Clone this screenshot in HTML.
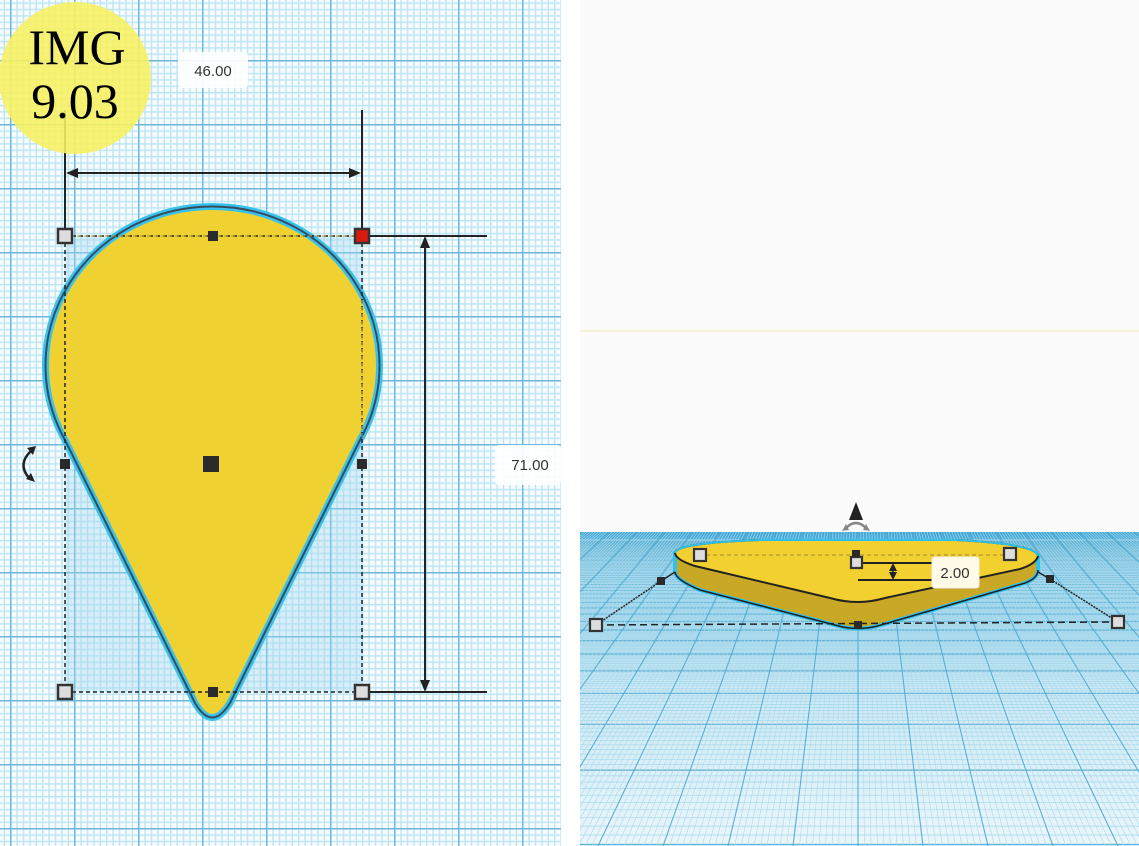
<!DOCTYPE html>
<html><head><meta charset="utf-8"><style>
html,body{margin:0;padding:0;background:#fff;width:1139px;height:846px;overflow:hidden}
svg{display:block}
</style></head><body>
<svg id="s" width="1139" height="846" viewBox="0 0 1139 846" xmlns="http://www.w3.org/2000/svg">
<defs>
<pattern id="minor" x="10" y="60" width="6.4" height="6.4" patternUnits="userSpaceOnUse">
<rect width="6.4" height="6.4" fill="#f6fbfd"/>
<rect x="0" y="0" width="1.4" height="6.4" fill="#bde5f4"/>
<rect x="0" y="0" width="6.4" height="1.4" fill="#bde5f4"/>
</pattern>
<pattern id="major" x="10" y="60" width="64" height="64" patternUnits="userSpaceOnUse">
<rect x="0" y="0" width="1.5" height="64" fill="#6db8d8"/>
<rect x="0" y="0" width="64" height="1.5" fill="#6db8d8"/>
</pattern>
<linearGradient id="gnd" x1="0" y1="0" x2="0" y2="1">
<stop offset="0" stop-color="#3fa6d6"/><stop offset="0.1" stop-color="#8ccbe6"/><stop offset="0.45" stop-color="#c8e7f3"/><stop offset="1" stop-color="#eaf6fb"/>
</linearGradient>
<clipPath id="rc"><rect x="580" y="532" width="559" height="314"/></clipPath>
</defs>
<rect x="0" y="0" width="561" height="846" fill="url(#minor)"/>
<rect x="0" y="0" width="561" height="846" fill="url(#major)"/>
<rect x="561" y="0" width="19" height="846" fill="#fff"/>
<rect x="65" y="236" width="297" height="456" fill="#9fd6ee" opacity="0.35"/>
<path d="M65 440 A167 159 0 1 1 360 440 L230 703 Q212 732 195 703 Z" fill="#f0d132" stroke="#35c3ee" stroke-width="7"/>
<path d="M65 440 A167 159 0 1 1 360 440 L230 703 Q212 732 195 703 Z" fill="none" stroke="#3a4a5a" stroke-width="2"/>
<g stroke="#222" stroke-width="1.5" stroke-dasharray="4 3" fill="none">
<line x1="65" y1="236" x2="362" y2="236"/><line x1="65" y1="692" x2="362" y2="692"/>
<line x1="65" y1="236" x2="65" y2="692"/><line x1="362" y1="236" x2="362" y2="692"/>
</g>
<g stroke="#b39a3a" stroke-width="1" stroke-dasharray="4 3" fill="none">
<line x1="70" y1="236" x2="357" y2="236"/><line x1="362" y1="300" x2="362" y2="440"/>
</g>
<g stroke="#222" stroke-width="2" fill="none">
<line x1="65" y1="110" x2="65" y2="236"/><line x1="362" y1="110" x2="362" y2="236"/>
<line x1="68" y1="173" x2="359" y2="173"/>
<line x1="362" y1="236" x2="487" y2="236"/><line x1="362" y1="692" x2="487" y2="692"/>
<line x1="425" y1="240" x2="425" y2="688"/>
</g>
<g fill="#222">
<path d="M66 173 L78 168 L78 178 Z"/><path d="M361 173 L349 168 L349 178 Z"/>
<path d="M425 236 L420 248 L430 248 Z"/><path d="M425 692 L420 680 L430 680 Z"/>
</g>
<rect x="178" y="52" width="70" height="36" rx="4" fill="#fff" opacity="0.9"/>
<text x="213" y="76" font-family="Liberation Sans,sans-serif" font-size="15" fill="#333" text-anchor="middle">46.00</text>
<rect x="495" y="445" width="66" height="40" rx="4" fill="#fff" opacity="0.9"/>
<text x="530" y="470" font-family="Liberation Sans,sans-serif" font-size="15" fill="#333" text-anchor="middle">71.00</text>
<g stroke="#333" stroke-width="2.5">
<rect x="58" y="229" width="14" height="14" fill="#ddd"/>
<rect x="355" y="229" width="14" height="14" fill="#d81a10"/>
<rect x="58" y="685" width="14" height="14" fill="#ddd"/>
<rect x="355" y="685" width="14" height="14" fill="#ddd"/>
</g>
<g fill="#2a2a2a">
<rect x="208" y="231" width="10" height="10"/><rect x="60" y="459" width="10" height="10"/>
<rect x="357" y="459" width="10" height="10"/><rect x="208" y="687" width="10" height="10"/>
<rect x="203" y="456" width="16" height="16"/>
</g>
<path d="M31 451 Q17 464 29 478" stroke="#222" stroke-width="2.5" fill="none"/>
<path d="M36 446 L27 448 L33 455 Z M35 482 L26 479 L31 473 Z" fill="#222"/>
<circle cx="75" cy="78" r="76" fill="#f8f060" opacity="0.88"/>
<text x="77" y="64" font-family="Liberation Serif,serif" font-size="50" fill="#000" text-anchor="middle">IMG</text>
<text x="75" y="118" font-family="Liberation Serif,serif" font-size="50" fill="#000" text-anchor="middle">9.03</text>
<rect x="580" y="0" width="559" height="532" fill="#fbfbfb"/>
<line x1="580" y1="331" x2="1139" y2="331" stroke="#f3f0c8" stroke-width="1.5"/>
<rect x="580" y="532" width="559" height="314" fill="url(#gnd)"/>
<g id="pg" clip-path="url(#rc)"></g>
<path d="M675 553 L675 572 Q676 580 700 590 L835 625 Q858 632 881 625 L1025 583 Q1038 578 1038 570 L1038 555 Z" fill="#c9a825" stroke="#2fc0ec" stroke-width="4"/>
<path d="M675 553 Q676 543 760 540 L955 540 Q1036 544 1038 556 Q1036 564 1020 569 L885 598 Q858 606 830 598 L695 566 Q676 560 675 553 Z" fill="#f2d030" stroke="#222" stroke-width="2"/>
<path d="M675 553 Q676 543 760 540 L955 540 Q1036 544 1038 556" fill="none" stroke="#2fc0ec" stroke-width="2"/>
<path d="M675 572 Q676 580 700 590 L835 625 Q858 632 881 625 L1025 583 Q1038 578 1038 570" fill="none" stroke="#222" stroke-width="1.5"/>
<line x1="706" y1="555" x2="1008" y2="555" stroke="#a08a30" stroke-dasharray="4 3"/>
<g stroke="#222" stroke-width="1.5" fill="none">
<line x1="596" y1="625" x2="1118" y2="622" stroke-dasharray="7 4"/>
<line x1="596" y1="625" x2="661" y2="581" stroke-dasharray="2 1"/>
<line x1="661" y1="581" x2="675" y2="572"/>
<line x1="1118" y1="622" x2="1050" y2="579" stroke-dasharray="2 1"/>
<line x1="1050" y1="579" x2="1038" y2="572"/>
<line x1="862" y1="563" x2="933" y2="563" stroke-width="2"/>
<line x1="858" y1="580" x2="933" y2="580" stroke-width="2"/>
<line x1="893" y1="565" x2="893" y2="578"/>
</g>
<path d="M893 563 L889 571 L897 571 Z M893 580 L889 572 L897 572 Z" fill="#222"/>
<rect x="932" y="557" width="47" height="31" rx="3" fill="#fffbe6" stroke="#eee"/>
<text x="955" y="578" font-family="Liberation Sans,sans-serif" font-size="15" fill="#333" text-anchor="middle">2.00</text>
<g stroke="#333" stroke-width="2.2" fill="#ddd">
<rect x="590" y="619" width="12" height="12"/><rect x="1112" y="616" width="12" height="12"/>
<rect x="694" y="549" width="12" height="12"/><rect x="1004" y="548" width="12" height="12"/>
<rect x="851" y="557" width="11" height="11"/>
</g>
<g fill="#2a2a2a">
<rect x="657" y="577" width="8" height="8"/><rect x="1046" y="575" width="8" height="8"/>
<rect x="854" y="621" width="8" height="8"/><rect x="852" y="550" width="8" height="7"/>
</g>
<path d="M856 502 L849 520 L863 520 Z" fill="#222"/>
<path d="M846 528 Q856 518 866 528" stroke="#888" stroke-width="2.5" fill="none"/>
<path d="M842 531 L846 524 L849 530 Z M870 531 L866 524 L863 530 Z" fill="#888"/>
</svg>
<script>
(function(){
var g=document.getElementById('pg'),h='';
var vx=858,vy=300,hz=532;
function ln(x1,y1,x2,y2,c,w){h+='<line x1="'+x1.toFixed(1)+'" y1="'+y1.toFixed(1)+'" x2="'+x2.toFixed(1)+'" y2="'+y2.toFixed(1)+'" stroke="'+c+'" stroke-width="'+w+'"/>';}
var C=2000;
for(var j=0;j<1200;j++){var z=6.4+j*0.2;var y=hz+C/z;if(y<hz+1.5)break;var maj=(j%10==0);ln(580,y,1139,y,maj?'#5aaed2':'#a3d7ec',maj?1.2:0.7);}
for(var k=-120;k<=120;k++){var xb=vx+k*6.5;var maj=(k%10==0);
var x1=vx+(xb-vx)*((hz-vy)/(846-vy));ln(x1,hz,xb,846,maj?'#5aaed2':'#a9daee',maj?1.1:0.6);}
g.innerHTML=h;
})();
</script>
</body></html>
